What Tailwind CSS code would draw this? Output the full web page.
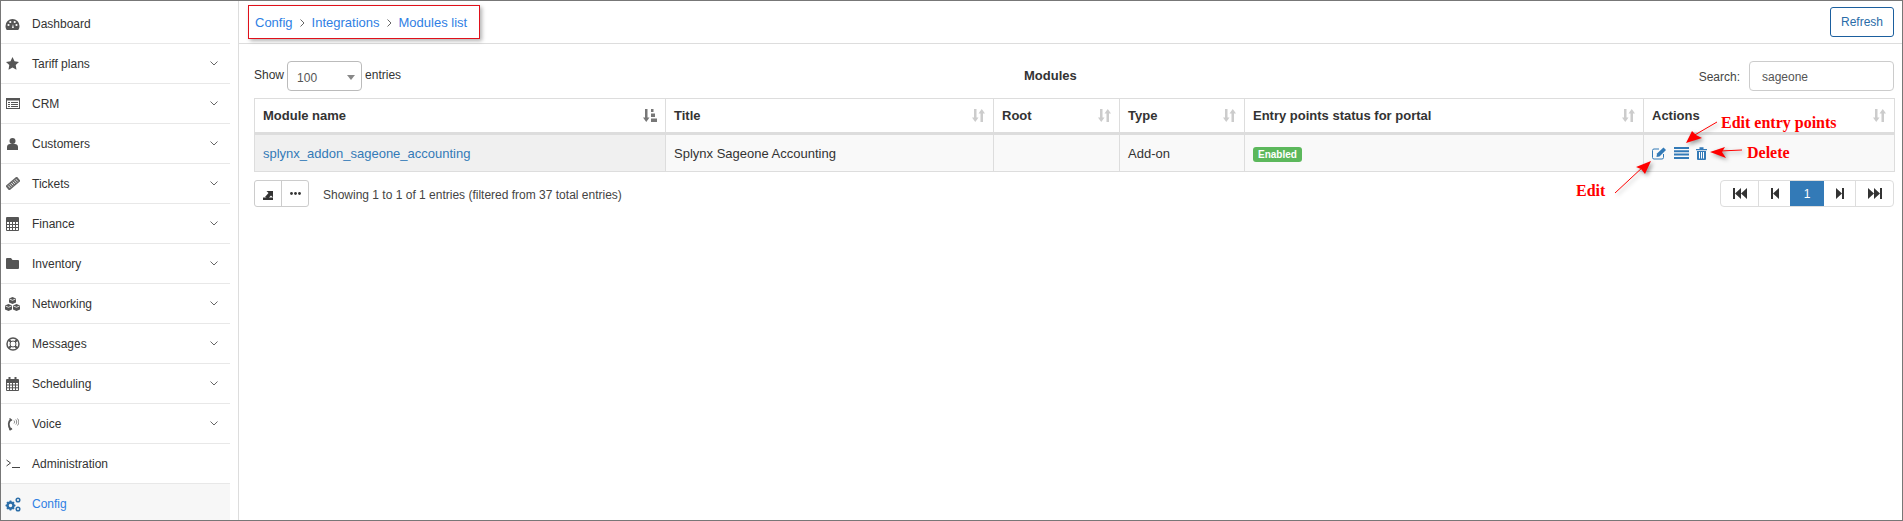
<!DOCTYPE html>
<html lang="en">
  <head>
    <meta charset="UTF-8" />
    <script src="https://cdn.jsdelivr.net/npm/@tailwindcss/browser@4"></script>
    <title>Modules list</title>
  </head>
  <body class="bg-white font-['Liberation_Sans',Arial,sans-serif] text-[12px] text-[#333]">
    <div class="relative flex h-[521px] w-[1903px] overflow-hidden border border-[#777]">
      <!-- sidebar -->
      <aside class="flex w-[238px] shrink-0 flex-col border-r border-[#ddd] pr-2 h-full">
        <a class="flex h-[43px] shrink-0 items-center border-b border-[#e8e8e8] pt-[4px]"><span class="flex w-[23px] justify-center"><svg width="15" height="13" viewBox="0 0 15 13" fill="#555"><path d="M7.5 1a7 7 0 0 0-7 7c0 1.600.5 3 1.300 4h11.400c.8-1 1.300-2.400 1.300-4a7 7 0 0 0-7-7z"/><circle cx="3.500" cy="7" r="1.100" fill="#fff"/><circle cx="5.300" cy="4" r="1.100" fill="#fff"/><circle cx="9.700" cy="4" r="1.100" fill="#fff"/><circle cx="11.500" cy="7" r="1.100" fill="#fff"/><path d="M7 10l1-4 .8 4z" fill="#fff"/></svg></span><span class="ml-[8px]">Dashboard</span></a>
        <a class="flex h-10 shrink-0 items-center border-b border-[#e8e8e8]"><span class="flex w-[23px] justify-center"><svg width="13" height="13" viewBox="0 0 13 13" fill="#555"><path d="M6.500 0l2 4.300 4.500.6-3.300 3.200.8 4.700-4-2.300-4 2.300.8-4.700L0 4.900l4.500-.6z"/></svg></span><span class="ml-[8px] flex-1">Tariff plans</span><svg class="mr-[12px]" width="8" height="5" viewBox="0 0 8 5" fill="none" stroke="#666"><path d="M.5.500L4 4l3.500-3.500"/></svg></a>
        <a class="flex h-10 shrink-0 items-center border-b border-[#e8e8e8]"><span class="flex w-[23px] justify-center"><svg width="14" height="11" viewBox="0 0 14 11" fill="#555"><path d="M0 0h14v11H0zm1 2.500V10h12V2.500z"/><path d="M2 4h2v1H2zM5 4h7v1H5zM2 6h2v1H2zM5 6h7v1H5zM2 8h2v1H2zM5 8h7v1H5z"/></svg></span><span class="ml-[8px] flex-1">CRM</span><svg class="mr-[12px]" width="8" height="5" viewBox="0 0 8 5" fill="none" stroke="#666"><path d="M.5.500L4 4l3.500-3.500"/></svg></a>
        <a class="flex h-10 shrink-0 items-center border-b border-[#e8e8e8]"><span class="flex w-[23px] justify-center"><svg width="11" height="12" viewBox="0 0 11 12" fill="#555"><circle cx="5.500" cy="3" r="3"/><path d="M0 12V9c0-2 1.500-3 3-3h5c1.500 0 3 1 3 3v3z"/></svg></span><span class="ml-[8px] flex-1">Customers</span><svg class="mr-[12px]" width="8" height="5" viewBox="0 0 8 5" fill="none" stroke="#666"><path d="M.5.500L4 4l3.500-3.500"/></svg></a>
        <a class="flex h-10 shrink-0 items-center border-b border-[#e8e8e8]"><span class="flex w-[23px] justify-center"><svg width="14" height="13" viewBox="0 0 14 13"><g transform="rotate(-40 7 6.500)"><rect x="-.5" y="3.500" width="15" height="6" rx="1" fill="#666"/><path d="M2 5v3M4 5v3M6 5v3M8 5v3M10 5v3M12 5v3" stroke="#fff" stroke-width=".8"/></g></svg></span><span class="ml-[8px] flex-1">Tickets</span><svg class="mr-[12px]" width="8" height="5" viewBox="0 0 8 5" fill="none" stroke="#666"><path d="M.5.500L4 4l3.500-3.500"/></svg></a>
        <a class="flex h-10 shrink-0 items-center border-b border-[#e8e8e8]"><span class="flex w-[23px] justify-center"><svg width="13" height="14" viewBox="0 0 13 14" fill="none" stroke="#555"><path d="M.5.500h12v13H.5z"/><path d="M.5 4.500h12M.5 7.500h12M.5 10.500h12M3.500 4.500v9M6.500 4.500v9M9.500 4.500v9"/><path d="M1 1h11v3H1z" fill="#555" stroke="none"/></svg></span><span class="ml-[8px] flex-1">Finance</span><svg class="mr-[12px]" width="8" height="5" viewBox="0 0 8 5" fill="none" stroke="#666"><path d="M.5.500L4 4l3.500-3.500"/></svg></a>
        <a class="flex h-10 shrink-0 items-center border-b border-[#e8e8e8]"><span class="flex w-[23px] justify-center"><svg width="13" height="11" viewBox="0 0 13 11" fill="#555"><path d="M1 0h4l1.500 2H12a1 1 0 0 1 1 1v7a1 1 0 0 1-1 1H1a1 1 0 0 1-1-1V1a1 1 0 0 1 1-1z"/></svg></span><span class="ml-[8px] flex-1">Inventory</span><svg class="mr-[12px]" width="8" height="5" viewBox="0 0 8 5" fill="none" stroke="#666"><path d="M.5.500L4 4l3.500-3.500"/></svg></a>
        <a class="flex h-10 shrink-0 items-center border-b border-[#e8e8e8]"><span class="flex w-[23px] justify-center"><svg width="17" height="14" viewBox="0 0 17 14" fill="#555"><path d="M8.500 0l3.500 1.500v4L8.500 7 5 5.500v-4z"/><path d="M4.500 7L8 8.500v4L4.500 14 1 12.500v-4z"/><path d="M12.500 7L16 8.500v4L12.500 14 9 12.500v-4z"/><path d="M5.500 2l3 1.300 3-1.300M1.500 9l3 1.300 3-1.300M9.500 9l3 1.300 3-1.300" fill="none" stroke="#fff" stroke-width=".8"/></svg></span><span class="ml-[8px] flex-1">Networking</span><svg class="mr-[12px]" width="8" height="5" viewBox="0 0 8 5" fill="none" stroke="#666"><path d="M.5.500L4 4l3.500-3.500"/></svg></a>
        <a class="flex h-10 shrink-0 items-center border-b border-[#e8e8e8]"><span class="flex w-[23px] justify-center"><svg width="14" height="14" viewBox="0 0 14 14" fill="none" stroke="#555"><circle cx="7" cy="7" r="6" stroke-width="1.500"/><circle cx="7" cy="7" r="3" stroke-width="1"/><path d="M3 3l2 2M11 3L9 5M3 11l2-2M11 11L9 9" stroke-width="2.200"/></svg></span><span class="ml-[8px] flex-1">Messages</span><svg class="mr-[12px]" width="8" height="5" viewBox="0 0 8 5" fill="none" stroke="#666"><path d="M.5.500L4 4l3.500-3.500"/></svg></a>
        <a class="flex h-10 shrink-0 items-center border-b border-[#e8e8e8]"><span class="flex w-[23px] justify-center"><svg width="13" height="14" viewBox="0 0 13 14" fill="none" stroke="#555"><path d="M.5 2.500h12v11H.5z"/><path d="M.5 5.500h12M.5 8h12M.5 10.800h12M3.500 5.500v8M6.500 5.500v8M9.500 5.500v8"/><path d="M1 2h11v3H1zM2.500 0h2v2h-2zM8.500 0h2v2h-2z" fill="#555" stroke="none"/></svg></span><span class="ml-[8px] flex-1">Scheduling</span><svg class="mr-[12px]" width="8" height="5" viewBox="0 0 8 5" fill="none" stroke="#666"><path d="M.5.500L4 4l3.500-3.500"/></svg></a>
        <a class="flex h-10 shrink-0 items-center border-b border-[#e8e8e8]"><span class="flex w-[23px] justify-center"><svg width="12" height="14" viewBox="0 0 12 14" fill="none" stroke="#555"><path d="M4 2.500C1.500 4.500 1 8.500 3.500 12.500" stroke-width="2"/><path d="M2.500 1.500l2.500 2M2.500 13l2.500-1.500" stroke-width="1.500"/><path d="M7 3.500c.7.800.7 2.200 0 3M8.800 2.500c1.200 1.300 1.200 3.700 0 5M10.500 1.500c1.800 2 1.800 5 0 7" stroke-width=".7"/></svg></span><span class="ml-[8px] flex-1">Voice</span><svg class="mr-[12px]" width="8" height="5" viewBox="0 0 8 5" fill="none" stroke="#666"><path d="M.5.500L4 4l3.500-3.500"/></svg></a>
        <a class="flex h-10 shrink-0 items-center border-b border-[#e8e8e8]"><span class="flex w-[23px] justify-center"><svg width="14" height="9" viewBox="0 0 14 9" fill="none" stroke="#444"><path d="M.5 1l4 3-4 3M6 8.500h8"/></svg></span><span class="ml-[8px] flex-1">Administration</span></a>
        <a class="flex flex-1 items-center bg-[#f7f7f7] pt-[4px] text-[#2f80e4]"><span class="flex w-[23px] justify-center"><svg width="16" height="15" viewBox="0 0 16 15" fill="none" stroke="#2c6ea8"><circle cx="5.500" cy="8.500" r="3" stroke-width="2.500"/><path d="M5.500 3.500v1.500M5.500 12v1.500M.5 8.500H2M9 8.500h1.500M2 5l1 1M8 11l1 1M2 12l1-1M8 6l1-1" stroke-width="1.700"/><circle cx="13" cy="3" r="1.800" stroke-width="1.500"/><circle cx="13" cy="12" r="1.800" stroke-width="1.500"/></svg></span><span class="ml-[8px]">Config</span></a>
      </aside>

      <main class="flex min-w-0 flex-1 flex-col">
        <!-- top bar -->
        <header class="flex h-[43px] shrink-0 items-center justify-between border-b border-[#ddd] pr-[8px] pl-[9px]">
          <nav class="flex h-[34px] w-[232px] items-center border border-[#e0101a] pt-[1px] pl-[6px] text-[13px] text-[#2f80e4] shadow-[2px_2px_4px_rgba(0,0,0,0.3)]">
            <span>Config</span>
            <svg class="mx-[7px]" width="5" height="8" viewBox="0 0 5 8" fill="none" stroke="#666"><path d="M.5.500L4 4 .5 7.500"/></svg>
            <span>Integrations</span>
            <svg class="mx-[7px]" width="5" height="8" viewBox="0 0 5 8" fill="none" stroke="#666"><path d="M.5.500L4 4 .5 7.500"/></svg>
            <span>Modules list</span>
          </nav>
          <button class="h-[30px] w-[64px] rounded-[3px] border border-[#1b5f9e] text-[#2a6ca8]">Refresh</button>
        </header>

        <div class="flex min-h-0 flex-1 flex-col pt-[17px] pr-[8px] pl-[15px]">
          <!-- table controls -->
          <div class="relative flex h-[30px] items-center justify-between">
            <div class="flex items-center gap-[3px]">
              <span class="-mt-[2px]">Show</span>
              <div class="flex h-[30px] w-[75px] items-center justify-between rounded-[4px] border border-[#bbb] pt-[3px] pr-[6px] pl-[9px] text-[#555]">
                <span>100</span>
                <span class="h-0 w-0 border-x-[4px] border-t-[5px] border-x-transparent border-t-[#888]"></span>
              </div>
              <span class="-mt-[2px]">entries</span>
            </div>
            <b class="absolute left-[770px] text-[13px]">Modules</b>
            <div class="flex items-center gap-[9px]">
              <span class="pt-[2px] text-[#444]">Search:</span>
              <div class="flex h-[30px] w-[145px] items-center rounded-[4px] border border-[#ccc] pt-[2px] pl-[12px] text-[#555]">sageone</div>
            </div>
          </div>

          <!-- table -->
          <table class="mt-[7px] w-[1640px] table-fixed border-collapse border border-[#ddd] text-[13px]">
            <colgroup>
              <col class="w-[411px]" /><col class="w-[328px]" /><col class="w-[126px]" /><col class="w-[125px]" /><col class="w-[399px]" /><col class="w-[251px]" />
            </colgroup>
            <thead>
              <tr class="h-[35px] border-b-[3px] border-[#ddd] text-left">
                <th class="border-r border-[#ddd] pr-[8px] pl-[8px] font-bold"><div class="flex items-center justify-between">Module name
                  <svg width="14" height="13" viewBox="0 0 14 13" fill="#777"><path d="M2 0h2.500v8.500h2L3.250 13 0 8.500h2zM8 0h2.500v3H8zM8 4.500h4v3.500H8zM8 9.500h6V13H8z"/></svg></div></th>
                <th class="border-r border-[#ddd] pr-[8px] pl-[8px] font-bold"><div class="flex items-center justify-between">Title
                  <svg width="13" height="13" viewBox="0 0 13 13" fill="#ccc"><path d="M2 0h2.500v8.500h2L3.250 13 0 8.500h2zM8.500 13H11V4.500h2L9.750 0 6.500 4.500h2z"/></svg></div></th>
                <th class="border-r border-[#ddd] pr-[8px] pl-[8px] font-bold"><div class="flex items-center justify-between">Root
                  <svg width="13" height="13" viewBox="0 0 13 13" fill="#ccc"><path d="M2 0h2.500v8.500h2L3.250 13 0 8.500h2zM8.500 13H11V4.500h2L9.750 0 6.500 4.500h2z"/></svg></div></th>
                <th class="border-r border-[#ddd] pr-[8px] pl-[8px] font-bold"><div class="flex items-center justify-between">Type
                  <svg width="13" height="13" viewBox="0 0 13 13" fill="#ccc"><path d="M2 0h2.500v8.500h2L3.250 13 0 8.500h2zM8.500 13H11V4.500h2L9.750 0 6.500 4.500h2z"/></svg></div></th>
                <th class="border-r border-[#ddd] pr-[8px] pl-[8px] font-bold"><div class="flex items-center justify-between">Entry points status for portal
                  <svg width="13" height="13" viewBox="0 0 13 13" fill="#ccc"><path d="M2 0h2.500v8.500h2L3.250 13 0 8.500h2zM8.500 13H11V4.500h2L9.750 0 6.500 4.500h2z"/></svg></div></th>
                <th class="pr-[8px] pl-[8px] font-bold"><div class="flex items-center justify-between">Actions
                  <svg width="13" height="13" viewBox="0 0 13 13" fill="#ccc"><path d="M2 0h2.500v8.500h2L3.250 13 0 8.500h2zM8.500 13H11V4.500h2L9.750 0 6.500 4.500h2z"/></svg></div></th>
              </tr>
            </thead>
            <tbody>
              <tr class="h-[38px] bg-[#f9f9f9]">
                <td class="border-r border-[#ddd] bg-[#f0f0f0] px-[8px] pt-[2px] text-[#337ab7]">splynx_addon_sageone_accounting</td>
                <td class="border-r border-[#ddd] px-[8px] pt-[2px]">Splynx Sageone Accounting</td>
                <td class="border-r border-[#ddd] px-[8px]"></td>
                <td class="border-r border-[#ddd] px-[8px] pt-[2px]">Add-on</td>
                <td class="border-r border-[#ddd] px-[8px] pt-[2px]"><span class="inline-block h-[15px] rounded-[3px] bg-[#5cb85c] px-[5px] text-[10px] leading-[15px] font-bold text-white">Enabled</span></td>
                <td class="px-[8px]">
                  <div class="flex items-center">
                    <svg width="15" height="13" viewBox="0 0 15 13" fill="none" stroke="#337ab7"><path d="M7 2H2a1.500 1.500 0 0 0-1.500 1.500v7A1.500 1.500 0 0 0 2 12h8a1.500 1.500 0 0 0 1.500-1.500V7"/><path d="M5 6.500L11.500.500l2.500 2.500-6.500 6.500L4.500 10z" fill="#337ab7" stroke="none"/></svg>
                    <svg class="ml-[7px]" width="15" height="12" viewBox="0 0 15 12" fill="#337ab7"><path d="M0 0h15v2H0zM0 3.300h15v2H0zM0 6.600h15v2H0zM0 9.900h15v2H0z"/></svg>
                    <svg class="ml-[7px]" width="11" height="13" viewBox="0 0 11 13" fill="#337ab7"><path d="M0 2h11v1.300H0zM3.500.3h4v1.700h-4z"/><path d="M1 4h9v8a1 1 0 0 1-1 1H2a1 1 0 0 1-1-1z"/><path d="M3.500 5v6.500M5.500 5v6.500M7.500 5v6.500" stroke="#fff"/></svg>
                  </div>
                </td>
              </tr>
            </tbody>
          </table>

          <!-- table footer -->
          <div class="mt-[8px] flex items-start justify-between">
            <div class="flex items-center">
              <div class="flex h-[27px] w-[55px] rounded-[3px] border border-[#ccc]">
                <span class="flex w-[27px] items-center justify-center border-r border-[#ccc]"><svg width="12" height="12" viewBox="0 0 12 12" fill="#333"><path d="M1 9.500h10V12H1zM3 9l3.500-4-2-2H11v6.500l-2-2L6.500 10z"/></svg></span>
                <span class="flex flex-1 items-center justify-center"><svg width="11" height="3" viewBox="0 0 11 3" fill="#333"><circle cx="1.500" cy="1.500" r="1.400"/><circle cx="5.500" cy="1.500" r="1.400"/><circle cx="9.500" cy="1.500" r="1.400"/></svg></span>
              </div>
              <span class="ml-[14px] pt-[2px] text-[#444]">Showing 1 to 1 of 1 entries (filtered from 37 total entries)</span>
            </div>
            <div class="flex h-[27px] w-[174px] overflow-hidden rounded-[4px] border border-[#ddd]">
              <span class="flex w-[38px] items-center justify-center border-r border-[#ddd]"><svg width="14" height="11" viewBox="0 0 14 10" preserveAspectRatio="none" fill="#333"><path d="M0 0h2v10H0zM8 0v10L2 5zM14 0v10L8 5z"/></svg></span>
              <span class="flex w-[31px] items-center justify-center"><svg width="8" height="11" viewBox="0 0 8 10" preserveAspectRatio="none" fill="#333"><path d="M0 0h2v10H0zM8 0v10L2 5z"/></svg></span>
              <span class="flex w-[34px] items-center justify-center bg-[#337ab7] text-white">1</span>
              <span class="flex w-[32px] items-center justify-center border-r border-[#ddd]"><svg width="8" height="11" viewBox="0 0 8 10" preserveAspectRatio="none" fill="#333"><path d="M0 0l6 5-6 5zM6 0h2v10H6z"/></svg></span>
              <span class="flex flex-1 items-center justify-center"><svg width="14" height="11" viewBox="0 0 14 10" preserveAspectRatio="none" fill="#333"><path d="M0 0l6 5-6 5zM6 0l6 5-6 5zM12 0h2v10h-2z"/></svg></span>
            </div>
          </div>
        </div>
      </main>

      <!-- screenshot annotations over the table -->
      <svg class="absolute top-[99px] left-[1599px] drop-shadow-[2px_2px_2px_rgba(0,0,0,0.4)]" width="160" height="100" viewBox="0 0 160 100" fill="#f00" stroke="none">
        <path d="M117 22L93 36" stroke="#f00" fill="none" />
        <path d="M86 43L102 38 96 35 92 31z" />
        <path d="M15 93L44 66" stroke="#f00" fill="none" />
        <path d="M51 61L36 67 41 69 45 74z" />
        <path d="M142 50L120 51" stroke="#f00" fill="none" />
        <path d="M110 52L125 47 122 52 126 58z" />
      </svg>
      <b class="absolute top-[113px] left-[1720px] font-['Liberation_Serif',serif] text-[16px] leading-[18px] text-[#f00]">Edit entry points</b>
      <b class="absolute top-[143px] left-[1746px] font-['Liberation_Serif',serif] text-[16px] leading-[18px] text-[#f00]">Delete</b>
      <b class="absolute top-[181px] left-[1575px] font-['Liberation_Serif',serif] text-[16px] leading-[18px] text-[#f00]">Edit</b>
    </div>
  </body>
</html>
